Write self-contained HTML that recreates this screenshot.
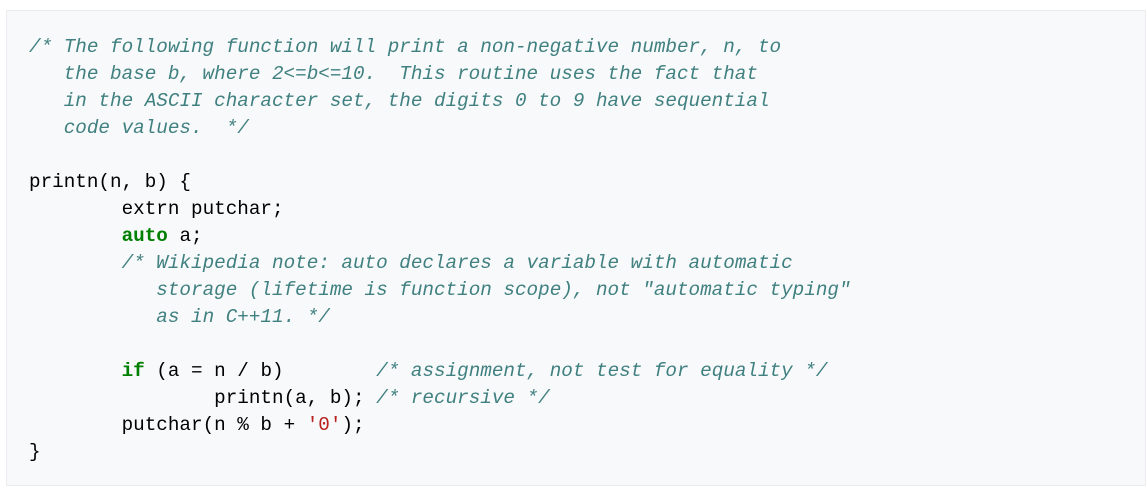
<!DOCTYPE html>
<html><head><meta charset="utf-8"><style>
html,body{margin:0;padding:0;background:#fff;width:1147px;height:495px;overflow:hidden}
pre{position:absolute;left:6px;top:10px;width:1140px;height:476px;box-sizing:border-box;margin:0;
background:#f8f9fa;border:1px solid #eaecf0;padding:23px 0 0 22px;
font-family:"Liberation Mono",monospace;font-size:19.3px;line-height:27px;color:#000;tab-size:8;-moz-tab-size:8}
.c{color:#408080;font-style:italic}
.k{color:#008000;font-weight:bold}
.s{color:#ba2121}
</style></head><body>
<pre><span class="c">/* The following function will print a non-negative number, n, to
   the base b, where 2&lt;=b&lt;=10.  This routine uses the fact that
   in the ASCII character set, the digits 0 to 9 have sequential
   code values.  */</span>

printn(n, b) {
	extrn putchar;
	<span class="k">auto</span> a;
	<span class="c">/* Wikipedia note: auto declares a variable with automatic
	   storage (lifetime is function scope), not "automatic typing"
	   as in C++11. */</span>

	<span class="k">if</span> (a = n / b)        <span class="c">/* assignment, not test for equality */</span>
		printn(a, b); <span class="c">/* recursive */</span>
	putchar(n % b + <span class="s">'0'</span>);
}</pre>
</body></html>
